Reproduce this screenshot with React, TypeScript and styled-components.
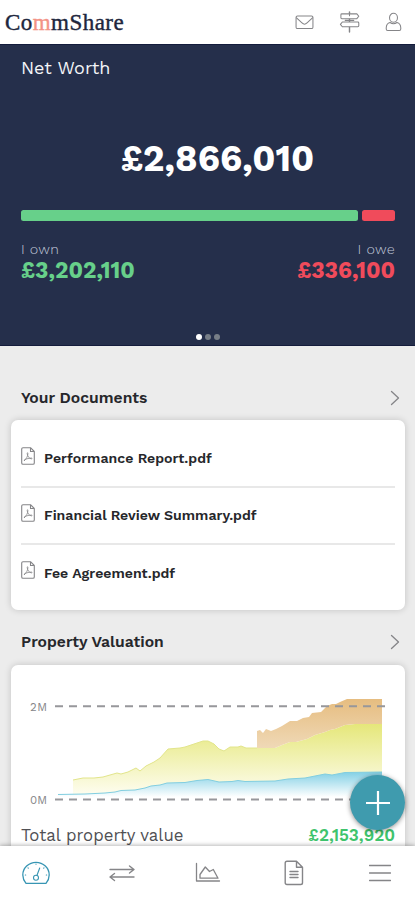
import React from "react";
import styled, { createGlobalStyle } from "styled-components";

const GlobalStyle = createGlobalStyle`
  * { box-sizing: border-box; }
  body { margin: 0; background: #ececec; }
`;

const Screen = styled.div`
  display: flex;
  flex-direction: column;
  width: 415px;
  height: 900px;
  overflow: hidden;
  background: #ececec;
  color: #26272b;
  font-family: "Work Sans", Inter, sans-serif;
`;

const Header = styled.header`
  display: flex;
  flex: none;
  align-items: center;
  justify-content: space-between;
  height: 44px;
  padding: 0 13px 0 5px;
  background: #fff;
`;

const Logo = styled.div`
  font: 23px/24px "Liberation Serif", serif;
  letter-spacing: 0.45px;
  color: #20263d;
  padding-top: 1px;
  -webkit-text-stroke: 0.4px;
  span { color: #f39286; }
`;

const HeaderIcons = styled.div`
  display: flex;
  align-items: center;
  gap: 25px;
`;

const Icon = styled.svg`
  display: block;
  flex: none;
  fill: none;
  stroke: currentColor;
  stroke-width: 1.1;
  stroke-linecap: round;
  stroke-linejoin: round;
  color: #858588;
`;

const Hero = styled.section`
  display: flex;
  flex: none;
  flex-direction: column;
  height: 302px;
  padding: 12px 20px 0 21px;
  background: #252f4b;
  border-top: 1px solid #141c3c;
  border-bottom: 1px solid #141c3c;
`;

const Text = styled.div<{ $size: number; $line: number; $weight?: number; $space?: number; $color?: string }>`
  font-size: ${p => p.$size}px;
  line-height: ${p => p.$line}px;
  font-weight: ${p => p.$weight ?? 400};
  letter-spacing: ${p => p.$space ?? 0}px;
  color: ${p => p.$color ?? "inherit"};
  white-space: nowrap;
`;

const NetWorth = styled(Text)`
  align-self: center;
  margin: 64px 0 35px 19px;
`;

const BalanceBar = styled.div`
  display: grid;
  grid-template-columns: 337px 33px;
  justify-content: space-between;
  height: 11px;
`;

const Segment = styled.div<{ $color: string }>`
  border-radius: 2.5px;
  background: ${p => p.$color};
`;

const Balances = styled.div`
  display: flex;
  justify-content: space-between;
  margin-top: 19px;
`;

const Balance = styled.div<{ $end?: boolean }>`
  display: flex;
  flex-direction: column;
  align-items: ${p => (p.$end ? "flex-end" : "flex-start")};
`;

const Dots = styled.div`
  display: flex;
  justify-content: center;
  gap: 3px;
  margin: auto 0 5px;
`;

const Dot = styled.i<{ $active?: boolean }>`
  width: 6px;
  height: 6px;
  border-radius: 50%;
  background: ${p => (p.$active ? "#fff" : "#777e87")};
`;

const Content = styled.main`
  flex: 1;
  min-height: 0;
  overflow: hidden;
  padding: 41px 10px 0 11px;
`;

const SectionHead = styled.div`
  display: flex;
  align-items: center;
  justify-content: space-between;
  height: 22px;
  padding: 0 5px 0 10px;
`;

const Card = styled.section`
  border-radius: 7px;
  background: #fff;
  box-shadow: 0 0 7px rgba(0, 0, 0, 0.18);
`;

const DocumentCard = styled(Card)`
  height: 190px;
  margin: 11px 0 21px;
  padding: 9px 10px 0;
`;

const DocumentRow = styled.div`
  display: flex;
  align-items: center;
  gap: 9px;
  height: 57.5px;
  & + & { border-top: 2px solid #e8e8e8; }
  &:first-child { height: 56.5px; padding-top: 2px; }
  svg { margin-top: -5px; }
`;

const ValueCard = styled(Card)`
  height: 220px;
  margin-top: 12px;
`;

const ValueRow = styled.div`
  display: flex;
  justify-content: space-between;
  padding: 0 10px;
`;

const BottomNav = styled.nav`
  position: relative;
  display: grid;
  flex: none;
  grid-template-columns: repeat(5, 86px);
  align-items: center;
  justify-items: center;
  justify-content: center;
  height: 54px;
  background: #fff;
  box-shadow: 0 -1px 4px rgba(0, 0, 0, 0.28);
`;

const AddButton = styled.button`
  position: absolute;
  top: -71px;
  right: 10px;
  display: grid;
  place-items: center;
  width: 55px;
  height: 55px;
  padding: 0;
  border: 0;
  border-radius: 50%;
  background: #3f9bae;
  box-shadow: 0 1px 5px rgba(0, 0, 0, 0.45);
  svg { color: #fff; stroke-width: 2.2; stroke-linecap: butt; }
`;

const ActiveIcon = styled(Icon)`
  color: #3795b3;
`;

const documents = ["Performance Report.pdf", "Financial Review Summary.pdf", "Fee Agreement.pdf"];

const PdfIcon = () => (
  <Icon width="14" height="18" viewBox="0 0 14 18">
    <path d="M2 .7h7.5L13.3 4.5V16q0 1.3-1.3 1.3H2Q.7 17.3.7 16V2Q.7.7 2 .7ZM9.5.9v3.6h3.6" />
    <path strokeWidth=".8" d="M3.4 13.5c2-1.5 3.6-4.7 3.5-7.1 0-1-.8-1-.7.1.2 2.8 2 5.2 4.4 5.4.8 0 .7-.8-.1-.8-2.1 0-5 .6-6.9 1.7-.8.5-.7 1-.2.7Z" />
  </Icon>
);

const Chevron = () => (
  <Icon width="10" height="16" viewBox="0 0 10 16"><path strokeWidth="1.3" d="m1.5 1.5 7 6.5-7 6.5" /></Icon>
);

const yellowTop = "73,780 83,778 94,778 103,777 117,773 121,774 128,772 136,768 140,771 146,766 154,762 160,758 168,749 180,748 185,747 197,743 203,741 208,741 214,744 219,749 224,751 230,747 238,747 241,746 246,748 257,748";
const sharedEdge = "257,748 275,748 282,745 290,742 296,742 307,739 315,735 325,732 330,730 335,729 345,725 355,724 382,724";
const sharedBack = sharedEdge.split(" ").reverse().join(" ");
const blueTop = "58,794.5 85,794 105,793 115,792 121,790.5 135,790 145,788 151,786 160,785 167,783 185,782.5 197,780.5 208,779.5 219,782 232,781.5 238,780.5 245,781.5 275,781 288,779 305,778 320,775 325,774 332,775 345,772.5 382,772";

const ChartCanvas = styled.svg`
  display: block;
`;

const ValuationChart = () => (
  <ChartCanvas width="394" height="158" viewBox="11 665 394 158">
    <defs>
      <linearGradient id="yellow" gradientUnits="userSpaceOnUse" x1="0" x2="0" y1="724" y2="798">
        <stop stopColor="#e5e77a" /><stop offset="1" stopColor="#fffef5" />
      </linearGradient>
      <linearGradient id="blue" gradientUnits="userSpaceOnUse" x1="0" x2="0" y1="772" y2="797">
        <stop stopColor="#83d0e5" /><stop offset="1" stopColor="#fff" />
      </linearGradient>
      <linearGradient id="orange" gradientUnits="userSpaceOnUse" x1="0" x2="0" y1="699" y2="750">
        <stop stopColor="#e6bd80" /><stop offset="1" stopColor="#f0dab9" />
      </linearGradient>
    </defs>
    <polygon fill="url(#yellow)" points={`${yellowTop} ${sharedEdge} 382,798 73,798`} />
    <polyline fill="none" stroke="#e2e58b" points={yellowTop} />
    <polygon fill="url(#orange)" points={`257,731 260,730 263,733 266,729 271,731 276,729 282,726 290,721 297,721 303,718 309,717 312,713 321,712 327,706 332,704 336,704 340,702 347,699 382,699 ${sharedBack}`} />
    <polygon fill="url(#blue)" points={`${blueTop} 382,798 58,798`} />
    <polyline fill="none" stroke="#82cee0" points={blueTop} />
    <g stroke="#97979b" strokeWidth="1.9" strokeDasharray="8 6">
      <path d="M55 706.3H386M55 799.5H386" />
    </g>
    <g fill="#858588" fontSize="11.5">
      <text x="30" y="710.5" textLength="17">2M</text>
      <text x="30" y="803.5" textLength="17">0M</text>
    </g>
  </ChartCanvas>
);

export default function App() {
  return (
    <>
      <GlobalStyle />
      <Screen>
        <Header>
          <Logo>Co<span>m</span>mShare</Logo>
          <HeaderIcons>
            <Icon width="19" height="15" viewBox="0 0 20 16"><rect x="1" y="1" width="18" height="13.5" rx="1.5" /><path d="m1.5 3 5.8 5.5q2.7 2.7 5.4 0L18.5 3" /></Icon>
            <Icon width="21" height="22" viewBox="1 0 21 23"><path d="M11.5 1v21" strokeWidth="1.5" /><path fill="#fff" d="M3.5 3h15.7l2 2.5-2 2.5H3.5Q2.5 8 2.5 7V4q0-1 1-1ZM20.2 11.5H4l-2 2.5 2 2.5h16.2q1 0 1-1v-3q0-1-1-1Z" /><path d="M11.5 3v2M7 9.8h9" /></Icon>
            <Icon width="17" height="20" viewBox="0 0 18 20"><ellipse cx="9" cy="5.5" rx="4.2" ry="4.7" /><path d="M5.3 10.5Q1.5 11.5 1.3 16v1.4q0 1.5 1.5 1.5h12.4q1.5 0 1.5-1.5V16q-.2-4.5-4-5.5Q9 13.2 5.3 10.5Z" /></Icon>
          </HeaderIcons>
        </Header>
        <Hero>
          <Text $size={18} $line={22} $color="#f4f5f8">Net Worth</Text>
          <NetWorth $size={36.1} $line={32} $weight={700} $color="#fff">£2,866,010</NetWorth>
          <BalanceBar><Segment $color="#67d08a" /><Segment $color="#f04b5b" /></BalanceBar>
          <Balances>
            <Balance>
              <Text $size={14.4} $line={18} $weight={300} $space={0.3} $color="#c0c7d8">I own</Text>
              <Text $size={22.6} $line={25} $weight={700} $color="#67d08a">£3,202,110</Text>
            </Balance>
            <Balance $end>
              <Text $size={14.4} $line={18} $weight={300} $space={0.3} $color="#c0c7d8">I owe</Text>
              <Text $size={22.6} $line={25} $weight={700} $color="#f04b5b">£336,100</Text>
            </Balance>
          </Balances>
          <Dots><Dot $active /><Dot /><Dot /></Dots>
        </Hero>
        <Content>
          <SectionHead><Text $size={15.7} $line={22} $weight={600}>Your Documents</Text><Chevron /></SectionHead>
          <DocumentCard>
            {documents.map(name => (
              <DocumentRow key={name}><PdfIcon /><Text $size={14.1} $line={20} $weight={600}>{name}</Text></DocumentRow>
            ))}
          </DocumentCard>
          <SectionHead><Text $size={15.7} $line={22} $weight={600}>Property Valuation</Text><Chevron /></SectionHead>
          <ValueCard>
            <ValuationChart />
            <ValueRow>
              <Text $size={16.8} $line={25} $color="#505054">Total property value</Text>
              <Text $size={17} $line={25} $weight={600} $color="#3fc46d">£2,153,920</Text>
            </ValueRow>
          </ValueCard>
        </Content>
        <BottomNav>
          <AddButton aria-label="Add"><Icon width="24" height="24" viewBox="0 0 24 24"><path d="M12 0v24M0 12h24" /></Icon></AddButton>
          <ActiveIcon width="28" height="24" viewBox="0 0 28 24"><path strokeWidth="1.3" d="M4 22.3Q.8 18.5.8 14a13.2 12.6 0 0 1 26.4 0q0 4.5-3.2 8.3Z" /><circle cx="14" cy="16.8" r="2.5" /><path d="m15 14.3 2.7-7.3M14 3v.3M3.7 14h-.4M24.7 14h-.4M6 6.8l.3.3M22 6.8l-.3.3" /></ActiveIcon>
          <Icon width="26" height="20" viewBox="0 0 26 20"><path strokeWidth="1.4" d="M1 6.5h23.5M20.5 3l4.5 3.5-4.5 3.5M25 14H1.5M5.5 10.5 1 14l4.5 3.5" /></Icon>
          <Icon width="26" height="22" viewBox="0 0 26 22"><path strokeWidth="1.3" d="M1.5 1.5v17.5h23M5 16.2v-3.7l5.3-7.5 4.2 4.5 3.8-2 4.7 8.7Z" /></Icon>
          <Icon width="20" height="26" viewBox="0 0 20 26"><path strokeWidth="1.4" d="M3 1.2h9.5l6 6v15.5q0 1.8-1.8 1.8H3q-1.8 0-1.8-1.8V3q0-1.8 1.8-1.8ZM12.5 1.2v6h6M6 11.5h8M6 14.5h8M6 17.5h8" /></Icon>
          <Icon width="22" height="20" viewBox="0 0 22 20"><path strokeWidth="1.5" d="M.5 2.5h21M.5 10h21M.5 17.5h21" /></Icon>
        </BottomNav>
      </Screen>
    </>
  );
}
